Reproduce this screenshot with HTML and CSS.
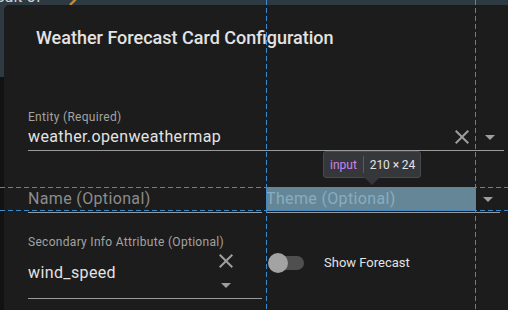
FILE: index.html
```html
<!DOCTYPE html>
<html>
<head>
<meta charset="utf-8">
<link rel="stylesheet" href="styles.css">
</head>
<body>
<div class="page">
  <div class="backdrop">
    <span class="bg-text">Result of</span>
    <svg class="bg-accent" width="12" height="8" viewBox="0 0 12 8"><path d="M1 7 L9 -1" stroke="#d08a2a" stroke-width="2.4"/></svg>
  </div>

  <div class="dialog">
    <h2 class="title">Weather Forecast Card Configuration</h2>
    <div class="form">
      <div class="field entity">
        <div class="field-label">Entity (Required)</div>
        <div class="field-row">
          <span class="field-value">weather.openweathermap</span>
          <svg class="icon close" viewBox="0 0 24 24"><path d="M19,6.41L17.59,5L12,10.59L6.41,5L5,6.41L10.59,12L5,17.59L6.41,19L12,13.41L17.59,19L19,17.59L13.41,12L19,6.41Z"/></svg>
          <svg class="icon menu" viewBox="0 0 24 24"><path d="M7,10L12,15L17,10H7Z"/></svg>
        </div>
      </div>

      <div class="pair">
        <div class="field simple">
          <div class="field-row">
            <span class="input placeholder">Name (Optional)</span>
          </div>
        </div>
        <div class="field simple">
          <div class="field-row">
            <span class="input placeholder highlighted">Theme (Optional)</span>
            <svg class="icon menu" viewBox="0 0 24 24"><path d="M7,10L12,15L17,10H7Z"/></svg>
          </div>
        </div>
      </div>

      <div class="pair lower">
        <div class="field secondary">
          <div class="field-label">Secondary Info Attribute (Optional)</div>
          <div class="field-row">
            <span class="field-value">wind_speed</span>
            <div class="icon-stack">
              <svg class="icon close" viewBox="0 0 24 24"><path d="M19,6.41L17.59,5L12,10.59L6.41,5L5,6.41L10.59,12L5,17.59L6.41,19L12,13.41L17.59,19L19,17.59L13.41,12L19,6.41Z"/></svg>
              <svg class="icon menu" viewBox="0 0 24 24"><path d="M7,10L12,15L17,10H7Z"/></svg>
            </div>
          </div>
        </div>
        <div class="switch-row">
          <span class="switch"><span class="track"></span><span class="thumb"></span></span>
          <span class="switch-label">Show Forecast</span>
        </div>
      </div>
    </div>
  </div>

  <div class="guide h g1"></div>
  <div class="guide h g2"></div>
  <div class="guide v g3"></div>
  <div class="guide v g4"></div>

  <div class="tooltip">
    <span class="tag">input</span><span class="sep"></span><span class="dims">210 × 24</span>
  </div>
</div>
</body>
</html>
```
FILE: styles.css
```css
html, body {
  margin: 0;
  padding: 0;
}
body {
  background: #121212;
  font-family: Roboto, "Noto Sans", sans-serif;
  width: 508px;
  height: 310px;
  overflow: hidden;
}
.page {
  position: relative;
  width: 508px;
  height: 310px;
  overflow: hidden;
}
.backdrop {
  height: 77px;
  background: #2e3a42;
  display: flex;
  align-items: flex-start;
  overflow: hidden;
}
.bg-text {
  font-size: 16px;
  line-height: 16px;
  color: #cfd3d6;
  margin-top: -11px;
  margin-left: -22px;
}
.bg-accent {
  margin-left: 28px;
  margin-top: -2px;
}
.dialog {
  position: absolute;
  left: 4px;
  top: 5px;
  width: 540px;
  height: 340px;
  background: #1c1c1c;
  border-radius: 5px;
  padding-top: 21px;
  box-sizing: border-box;
}
.title {
  margin: 0 0 0 32px;
  font-size: 18px;
  line-height: 24px;
  font-weight: 500;
  color: #e3e3e3;
}
.form {
  margin-top: 60px;
  padding-left: 24px;
}
.field {
  border-bottom: 1px solid #9a9a9a;
}
.entity {
  width: 476px;
}
.field-label {
  font-size: 12px;
  line-height: 14px;
  letter-spacing: 0.3px;
  color: #a3a3a3;
}
.field-row {
  display: flex;
  align-items: center;
}
.entity .field-row {
  height: 26px;
}
.field-value {
  flex: 1;
  font-size: 16px;
  line-height: 24px;
  letter-spacing: 0.38px;
  color: #e3e3e3;
}
.icon {
  width: 24px;
  height: 24px;
  fill: #9e9e9e;
  flex: none;
}
.entity .close {
  margin-right: 4px;
}
.entity .menu {
  margin-right: 2px;
}
.pair {
  display: grid;
  grid-template-columns: 234px 234px;
  column-gap: 4px;
  margin-top: 36px;
}
.simple {
  padding-bottom: 1px;
}
.simple .field-row {
  height: 24px;
}
.input {
  width: 210px;
  height: 24px;
  font-size: 16px;
  line-height: 24px;
  letter-spacing: 0.35px;
  flex: none;
  position: relative;
}
.placeholder {
  color: #8c8c8c;
}
.highlighted::after {
  content: "";
  position: absolute;
  inset: 0;
  background: rgba(122, 164, 186, 0.78);
}
.highlighted {
  color: #b9c9d2;
  z-index: 0;
}
.simple .menu {
  margin-left: auto;
}
.pair.lower {
  margin-top: 22px;
  align-items: start;
}
.secondary {
  padding-bottom: 1px;
}
.icon-stack {
  display: flex;
  flex-direction: column;
  margin-right: 24px;
}
.switch-row {
  display: flex;
  align-items: center;
  margin-top: 18px;
  padding-left: 2px;
  height: 20px;
}
.switch {
  position: relative;
  width: 36px;
  height: 20px;
  flex: none;
}
.track {
  position: absolute;
  left: 2px;
  top: 3px;
  width: 34px;
  height: 14px;
  border-radius: 7px;
  background: #4f4f4f;
}
.thumb {
  position: absolute;
  left: 0;
  top: 0;
  width: 20px;
  height: 20px;
  border-radius: 50%;
  background: #a3a3a3;
}
.switch-label {
  margin-left: 20px;
  font-size: 13px;
  line-height: 20px;
  color: #e3e3e3;
}
.guide {
  position: absolute;
  z-index: 5;
}
.guide.h {
  left: 0;
  width: 508px;
  height: 1px;
  background: repeating-linear-gradient(90deg, #3a8ad4 0 5px, transparent 5px 8px);
}
.guide.v {
  top: 0;
  height: 310px;
  width: 1px;
  background: repeating-linear-gradient(180deg, #3a8ad4 0 5px, transparent 5px 8px);
}
.g1 { top: 187px; }
.g2 { top: 210px; }
.g3 { left: 266px; }
.g4 { left: 475px; }
.tooltip {
  position: absolute;
  z-index: 6;
  left: 323px;
  top: 151px;
  height: 27px;
  padding: 0 5px 0 6px;
  box-sizing: border-box;
  display: flex;
  align-items: center;
  background: #36373b;
  border: 1px solid #48494d;
  border-radius: 3px;
  font-size: 12px;
  font-family: Roboto, "Noto Sans", sans-serif;
}
.tooltip::after {
  content: "";
  position: absolute;
  left: 40px;
  bottom: -8px;
  border-left: 8px solid transparent;
  border-right: 8px solid transparent;
  border-top: 8px solid #36373b;
}
.tag {
  color: #c983f0;
}
.sep {
  width: 1px;
  height: 17px;
  background: #5a5b5f;
  margin: 0 6px;
}
.dims {
  color: #e3e3e3;
  letter-spacing: -0.1px;
}
```
